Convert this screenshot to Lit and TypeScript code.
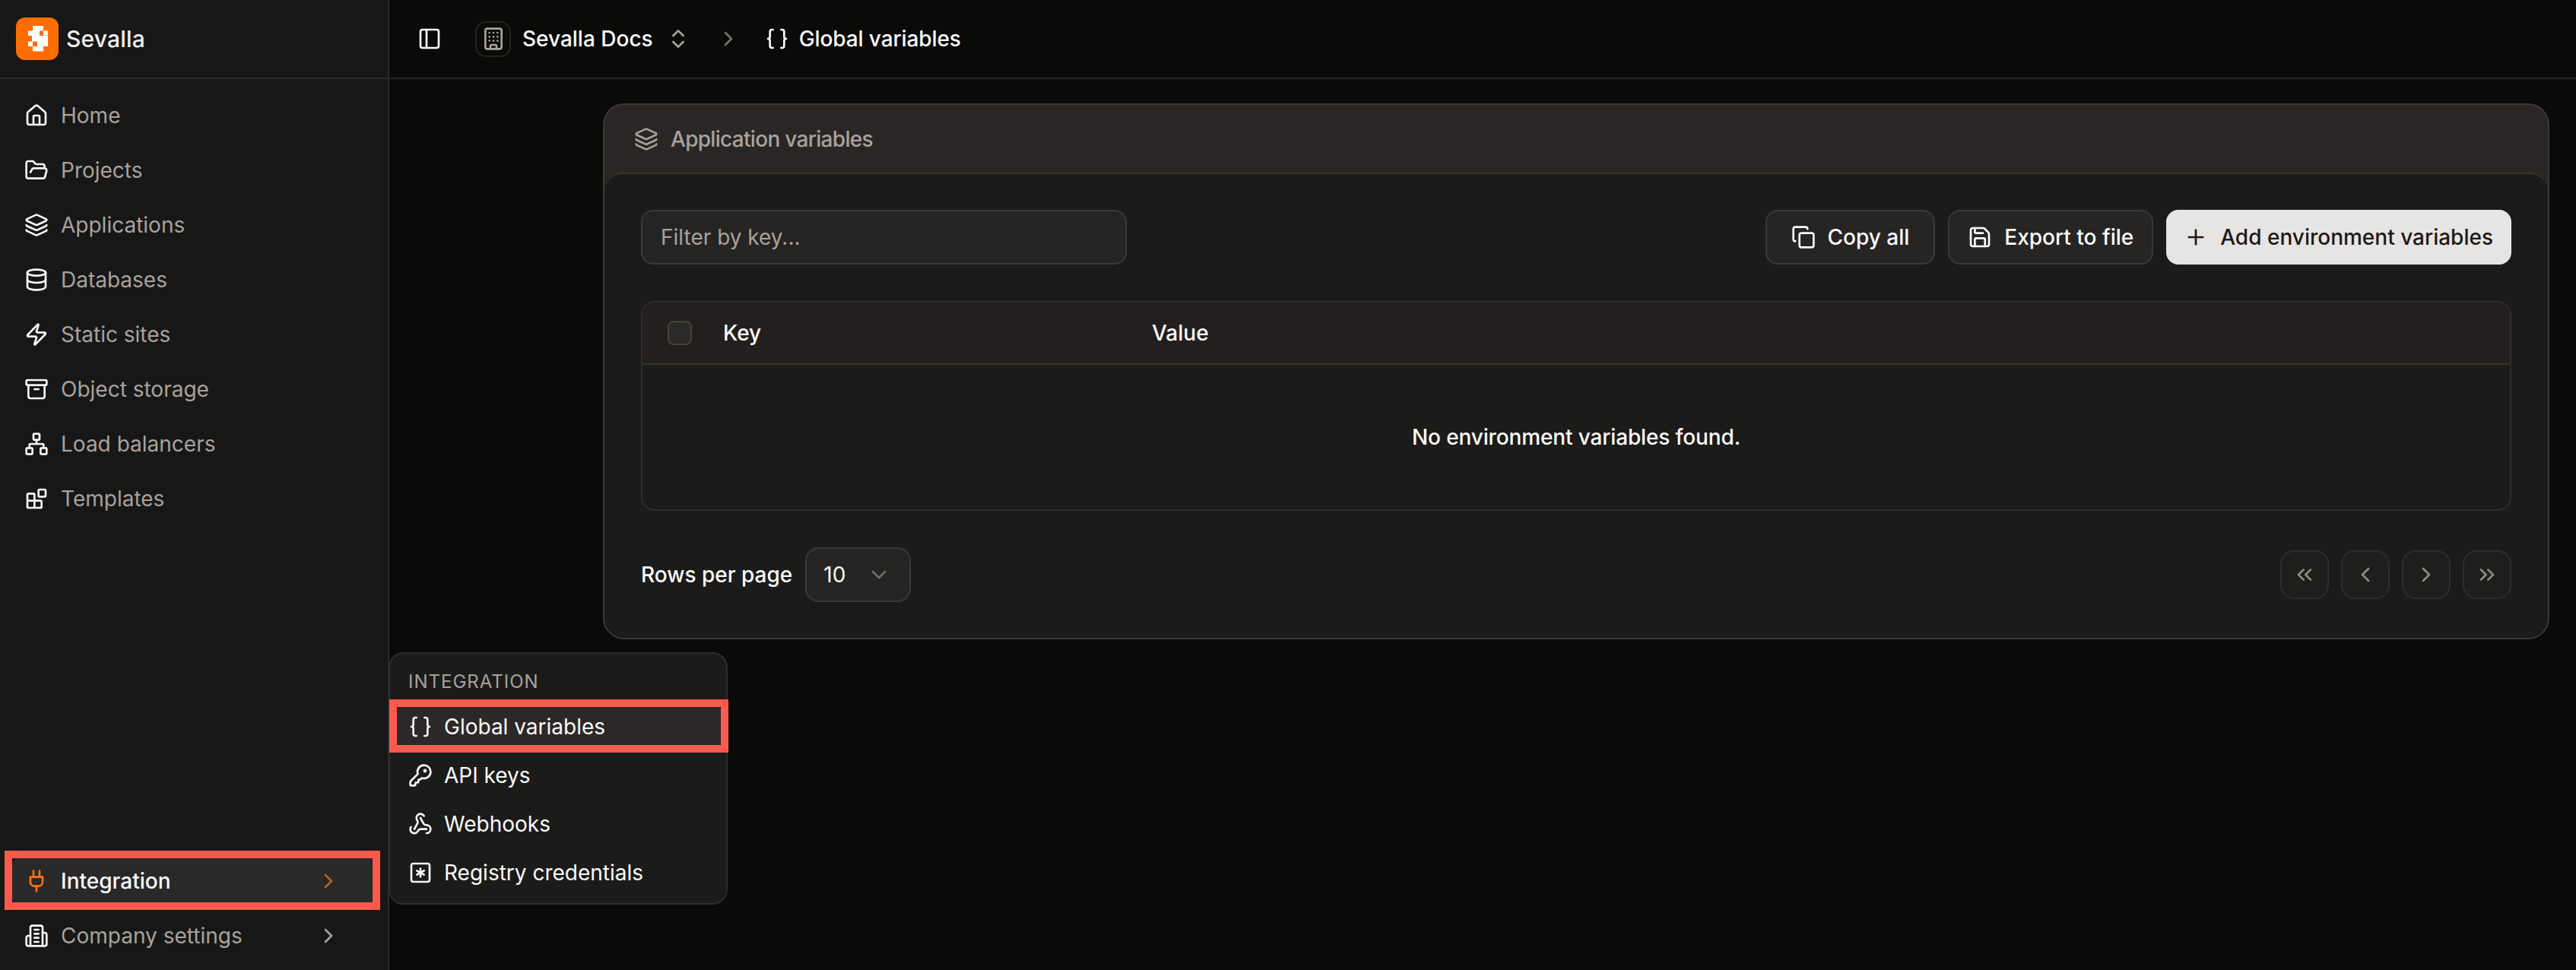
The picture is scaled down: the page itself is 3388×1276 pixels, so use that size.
import { LitElement, html, css, svg } from 'lit';
import { customElement } from 'lit/decorators.js';

// lucide style icon bodies, all on a 24 grid
const icons: Record<string, unknown> = {
  home: svg`<path d="M15 21v-8a1 1 0 0 0-1-1h-4a1 1 0 0 0-1 1v8"/><path d="M3 10a2 2 0 0 1 .709-1.528l7-5.999a2 2 0 0 1 2.582 0l7 5.999A2 2 0 0 1 21 10v9a2 2 0 0 1-2 2H5a2 2 0 0 1-2-2z"/>`,
  folder: svg`<path d="m6 14 1.5-2.9A2 2 0 0 1 9.24 10H20a2 2 0 0 1 1.94 2.5l-1.54 6a2 2 0 0 1-1.95 1.5H4a2 2 0 0 1-2-2V5a2 2 0 0 1 2-2h3.9a2 2 0 0 1 1.69.9l.81 1.2a2 2 0 0 0 1.67.9H18a2 2 0 0 1 2 2v2"/>`,
  layers: svg`<path d="M12.83 2.18a2 2 0 0 0-1.66 0L2.6 6.08a1 1 0 0 0 0 1.83l8.58 3.91a2 2 0 0 0 1.66 0l8.58-3.9a1 1 0 0 0 0-1.83z"/><path d="M2 12a1 1 0 0 0 .58.91l8.6 3.91a2 2 0 0 0 1.65 0l8.58-3.9A1 1 0 0 0 22 12"/><path d="M2 17a1 1 0 0 0 .58.91l8.6 3.91a2 2 0 0 0 1.65 0l8.58-3.9A1 1 0 0 0 22 17"/>`,
  database: svg`<ellipse cx="12" cy="5" rx="9" ry="3"/><path d="M3 5V19A9 3 0 0 0 21 19V5"/><path d="M3 12A9 3 0 0 0 21 12"/>`,
  zap: svg`<path d="M4 14a1 1 0 0 1-.78-1.63l9.9-10.2a.5.5 0 0 1 .86.46l-1.92 6.02A1 1 0 0 0 13 10h7a1 1 0 0 1 .78 1.63l-9.9 10.2a.5.5 0 0 1-.86-.46l1.92-6.02A1 1 0 0 0 11 14z"/>`,
  archive: svg`<rect width="20" height="5" x="2" y="3" rx="1"/><path d="M4 8v11a2 2 0 0 0 2 2h12a2 2 0 0 0 2-2V8"/><path d="M10 12h4"/>`,
  network: svg`<rect x="16" y="16" width="6" height="6" rx="1"/><rect x="2" y="16" width="6" height="6" rx="1"/><rect x="9" y="2" width="6" height="6" rx="1"/><path d="M5 16v-3a1 1 0 0 1 1-1h12a1 1 0 0 1 1 1v3"/><path d="M12 12V8"/>`,
  blocks: svg`<rect width="7" height="7" x="14" y="3" rx="1"/><path d="M10 21V8a1 1 0 0 0-1-1H4a1 1 0 0 0-1 1v12a1 1 0 0 0 1 1h12a1 1 0 0 0 1-1v-5a1 1 0 0 0-1-1H3"/>`,
  plug: svg`<path d="M12 22v-5"/><path d="M9 8V2"/><path d="M15 8V2"/><path d="M18 8v5a4 4 0 0 1-4 4h-4a4 4 0 0 1-4-4V8Z"/>`,
  company: svg`<path d="M6 22V4a2 2 0 0 1 2-2h8a2 2 0 0 1 2 2v18Z"/><path d="M6 12H4a2 2 0 0 0-2 2v6a2 2 0 0 0 2 2h2"/><path d="M18 9h2a2 2 0 0 1 2 2v9a2 2 0 0 1-2 2h-2"/><path d="M10 6h4"/><path d="M10 10h4"/><path d="M10 14h4"/><path d="M10 18h4"/>`,
  right: svg`<path d="m9 18 6-6-6-6"/>`,
  left: svg`<path d="m15 18-6-6 6-6"/>`,
  down: svg`<path d="m6 9 6 6 6-6"/>`,
  first: svg`<path d="m11 17-5-5 5-5"/><path d="m18 17-5-5 5-5"/>`,
  last: svg`<path d="m6 17 5-5-5-5"/><path d="m13 17 5-5-5-5"/>`,
  updown: svg`<path d="m7 15 5 5 5-5"/><path d="m7 9 5-5 5 5"/>`,
  braces: svg`<path d="M8 3H7a2 2 0 0 0-2 2v5a2 2 0 0 1-2 2 2 2 0 0 1 2 2v5c0 1.1.9 2 2 2h1"/><path d="M16 21h1a2 2 0 0 0 2-2v-5c0-1.1.9-2 2-2a2 2 0 0 1-2-2V5a2 2 0 0 0-2-2h-1"/>`,
  key: svg`<path d="M2.586 17.414A2 2 0 0 0 2 18.828V21a1 1 0 0 0 1 1h3a1 1 0 0 0 1-1v-1a1 1 0 0 1 1-1h1a1 1 0 0 0 1-1v-1a1 1 0 0 1 1-1h.172a2 2 0 0 0 1.414-.586l.814-.814a6.5 6.5 0 1 0-4-4z"/><circle cx="16.5" cy="7.500" r=".8"/>`,
  webhook: svg`<path d="M18 16.98h-5.99c-1.1 0-1.95.94-2.48 1.9A4 4 0 0 1 2 17c.01-.7.2-1.4.57-2"/><path d="m6 17 3.13-5.78c.53-.97.1-2.18-.5-3.1a4 4 0 1 1 6.89-4.06"/><path d="m12 6 3.13 5.73C15.66 12.7 16.9 13 18 13a4 4 0 0 1 0 8"/>`,
  asterisk: svg`<rect width="18" height="18" x="3" y="3" rx="2"/><path d="M12 8v8"/><path d="m8.5 14 7-4"/><path d="m8.5 10 7 4"/>`,
  panel: svg`<rect width="18" height="18" x="3" y="3" rx="2"/><path d="M9 3v18"/>`,
  building: svg`<path d="M12 10h.01"/><path d="M12 14h.01"/><path d="M12 6h.01"/><path d="M16 10h.01"/><path d="M16 14h.01"/><path d="M16 6h.01"/><path d="M8 10h.01"/><path d="M8 14h.01"/><path d="M8 6h.01"/><path d="M9 22v-3a1 1 0 0 1 1-1h4a1 1 0 0 1 1 1v3"/><rect x="4" y="2" width="16" height="20" rx="2"/>`,
  copy: svg`<rect width="14" height="14" x="8" y="8" rx="2"/><path d="M4 16c-1.1 0-2-.9-2-2V4c0-1.1.9-2 2-2h10c1.1 0 2 .9 2 2"/>`,
  save: svg`<path d="M15.2 3a2 2 0 0 1 1.4.6l3.8 3.8a2 2 0 0 1 .6 1.4V19a2 2 0 0 1-2 2H5a2 2 0 0 1-2-2V5a2 2 0 0 1 2-2z"/><path d="M17 21v-7a1 1 0 0 0-1-1H8a1 1 0 0 0-1 1v7"/><path d="M7 3v4a1 1 0 0 0 1 1h7"/>`,
  plus: svg`<path d="M5 12h14"/><path d="M12 5v14"/>`,
};

const icon = (name: string) =>
  html`<svg class="ic" viewBox="0 0 24 24" fill="none" stroke="currentColor" stroke-linecap="round" stroke-linejoin="round">${icons[name]}</svg>`;

const mainNav = [
  ['home', 'Home'],
  ['folder', 'Projects'],
  ['layers', 'Applications'],
  ['database', 'Databases'],
  ['zap', 'Static sites'],
  ['archive', 'Object storage'],
  ['network', 'Load balancers'],
  ['blocks', 'Templates'],
];

const subNav = [
  ['key', 'API keys'],
  ['webhook', 'Webhooks'],
  ['asterisk', 'Registry credentials'],
];

@customElement('app-root')
export class AppRoot extends LitElement {
  static styles = css`
    :host {
      display: flex;
      position: relative;
      width: 100%;
      height: 100vh;
      overflow: hidden;
      background: #0a0a09;
      color: #fafaf9;
      font-family: Inter, "Liberation Sans", sans-serif;
      font-size: 28px;
      font-weight: 500;
      line-height: 40px;
    }
    * {
      box-sizing: border-box;
    }
    .ic {
      flex: none;
      width: 32px;
      height: 32px;
      stroke-width: 2;
    }

    /* sidebar */
    .sidebar {
      flex: none;
      width: 512px;
      display: flex;
      flex-direction: column;
      background: #171717;
      border-right: 2px solid #2b2b2b;
    }
    .brand {
      flex: none;
      height: 104px;
      display: flex;
      align-items: center;
      gap: 10px;
      padding-left: 21px;
      border-bottom: 2px solid #2b2b2b;
      font-size: 30px;
      letter-spacing: 0.2px;
      color: #eeeeec;
    }
    .logo {
      width: 56px;
      height: 56px;
      flex: none;
    }
    .nav {
      display: flex;
      flex-direction: column;
      gap: 8px;
      padding: 16px;
    }
    .nav.bottom {
      margin-top: auto;
      padding-bottom: 13px;
    }
    .row {
      position: relative;
      height: 64px;
      display: flex;
      align-items: center;
      gap: 16px;
      padding: 0 16px;
      border-radius: 12px;
      color: #a8a29e;
      font-weight: 400;
    }
    .row .ic {
      color: #f5f5f4;
    }
    .row .chev {
      margin-left: auto;
      margin-right: 30px;
      display: flex;
    }
    .row .chev .ic {
      color: #a8a29e;
    }
    .row.active {
      background: #292929;
      color: #fafaf9;
      font-weight: 500;
    }
    .row.active .ic {
      color: #f97316;
    }
    .row.active .chev .ic {
      color: #b4611f;
    }
    .mark::after {
      content: '';
      position: absolute;
      border: 10px solid #fd5a4e;
      pointer-events: none;
    }
    .row.active.mark::after {
      inset: -8px -6px -6px -10px;
    }

    /* flyout menu */
    .flyout {
      position: absolute;
      left: 511px;
      top: 858px;
      width: 446px;
      height: 332px;
      padding: 8px 7px 8px 8px;
      background: #1b1b1a;
      border: 2px solid #2e2d2c;
      border-radius: 20px;
    }
    .flyout .label {
      height: 56px;
      display: flex;
      align-items: center;
      padding: 2px 0 0 16px;
      font-size: 24px;
      font-weight: 400;
      letter-spacing: 1px;
      color: #a8a29e;
    }
    .flyout .row {
      gap: 15px;
      color: #fafaf9;
    }
    .flyout .row.current {
      background: #2c2827;
    }
    .flyout .row.mark::after {
      inset: -4px -10px -2px -9px;
    }

    /* main column */
    .main {
      flex: 1;
      min-width: 0;
      display: flex;
      flex-direction: column;
    }
    .topbar {
      flex: none;
      height: 104px;
      display: flex;
      align-items: center;
      padding-left: 37px;
      border-bottom: 2px solid #262625;
    }
    .tile {
      width: 47px;
      height: 47px;
      margin: 0 15px 0 44px;
      display: flex;
      align-items: center;
      justify-content: center;
      border: 2px solid #222221;
      border-radius: 14px;
      color: #a8a29e;
    }
    .updown {
      margin: 0 34px 0 17px;
      display: flex;
      color: #a8a29e;
    }
    .crumb-sep {
      display: flex;
      margin-right: 32px;
      color: #78716c;
    }
    .crumb-ic {
      display: flex;
      margin-right: 13px;
    }
    .crumb-current {
      letter-spacing: -0.1px;
    }
    .content {
      flex: 1;
      padding: 32px 35px 0 281px;
    }

    /* card */
    .card {
      height: 705px;
      display: flex;
      flex-direction: column;
      overflow: hidden;
      background: #2a2625;
      border: 2px solid #3b3937;
      border-radius: 28px;
    }
    .card-head {
      flex: none;
      height: 89px;
      display: flex;
      align-items: center;
      gap: 16px;
      padding-left: 39px;
      letter-spacing: -0.7px;
      color: #a8a29e;
    }
    .panel {
      flex: 1;
      display: flex;
      flex-direction: column;
      padding: 47px 48px;
      background: #1b1b19;
      border-top: 2px solid #35322f;
      border-radius: 24px 24px 0 0;
    }
    .toolbar {
      display: flex;
      justify-content: space-between;
      height: 72px;
    }
    .filter {
      width: 639px;
      display: flex;
      align-items: center;
      padding-left: 24px;
      background: #252423;
      border: 2px solid #3a3937;
      border-radius: 16px;
      color: #a8a29e;
      font-weight: 400;
    }
    .actions {
      display: flex;
      gap: 17px;
    }
    .btn {
      display: flex;
      align-items: center;
      gap: 16px;
      padding: 0 24px;
      background: #262524;
      border: 2px solid #3a3937;
      border-radius: 16px;
    }
    .btn.wide {
      padding: 0 32px;
    }
    .btn.primary {
      background: #e7e5e4;
      border-color: #e7e5e4;
      color: #1c1917;
      padding: 0 22px 0 21px;
    }

    /* table */
    .table {
      flex: none;
      height: 276px;
      margin-top: 48px;
      display: flex;
      flex-direction: column;
      overflow: hidden;
      border: 2px solid #2e2d2b;
      border-radius: 18px;
    }
    .thead {
      flex: none;
      height: 82px;
      display: flex;
      align-items: center;
      padding-left: 33px;
      background: #231f1e;
      border-bottom: 2px solid #35332f;
    }
    .check {
      width: 32px;
      height: 32px;
      background: #2a2a29;
      border: 2px solid #44433f;
      border-radius: 8px;
    }
    .th-key {
      width: 564px;
      margin-left: 41px;
    }
    .tbody {
      flex: 1;
      display: flex;
      align-items: center;
      justify-content: center;
      letter-spacing: -0.14px;
    }

    /* footer */
    .footer {
      margin-top: 48px;
      height: 72px;
      display: flex;
      align-items: center;
      justify-content: space-between;
    }
    .rows {
      display: flex;
      align-items: center;
      gap: 17px;
    }
    .select {
      width: 139px;
      height: 72px;
      display: flex;
      align-items: center;
      justify-content: space-between;
      padding: 0 24px 0 22px;
      background: #252423;
      border: 2px solid #3a3937;
      border-radius: 18px;
      font-weight: 400;
    }
    .select .ic {
      color: #6f6d69;
    }
    .pager {
      display: flex;
      gap: 16px;
    }
    .page {
      width: 64px;
      height: 64px;
      display: flex;
      align-items: center;
      justify-content: center;
      background: #1e1e1c;
      border: 2px solid #2e2d2b;
      border-radius: 18px;
      color: #8f8c87;
    }
  `;

  render() {
    return html`
      <aside class="sidebar">
        <div class="brand">
          <svg class="logo" viewBox="0 0 56 56">
            <rect width="56" height="56" rx="12" fill="#ff6c00" />
            <path fill="#fff" d="M22 11h14v6.500H22zM16 17.500h15v6.500H16zM36 17.500h6v6h-6zM21 24h21v7.500H21zM16 31.500h6v6.500h-6zM28 31.500h14v6.500H28zM22 38h14v6.500H22z" />
          </svg>
          Sevalla
        </div>
        <nav class="nav">
          ${mainNav.map(([ic, label]) => html`<div class="row">${icon(ic)}${label}</div>`)}
        </nav>
        <nav class="nav bottom">
          <div class="row active mark">
            ${icon('plug')}Integration<span class="chev">${icon('right')}</span>
          </div>
          <div class="row">
            ${icon('company')}Company settings<span class="chev">${icon('right')}</span>
          </div>
        </nav>
      </aside>

      <div class="main">
        <header class="topbar">
          ${icon('panel')}
          <span class="tile">${icon('building')}</span>
          Sevalla Docs
          <span class="updown">${icon('updown')}</span>
          <span class="crumb-sep">${icon('right')}</span>
          <span class="crumb-ic">${icon('braces')}</span>
          <span class="crumb-current">Global variables</span>
        </header>
        <div class="content">
          <section class="card">
            <div class="card-head">${icon('layers')}Application variables</div>
            <div class="panel">
              <div class="toolbar">
                <div class="filter">Filter by key...</div>
                <div class="actions">
                  <div class="btn wide">${icon('copy')}Copy all</div>
                  <div class="btn">${icon('save')}Export to file</div>
                  <div class="btn primary">${icon('plus')}Add environment variables</div>
                </div>
              </div>
              <div class="table">
                <div class="thead">
                  <span class="check"></span>
                  <span class="th-key">Key</span>
                  <span>Value</span>
                </div>
                <div class="tbody">No environment variables found.</div>
              </div>
              <div class="footer">
                <div class="rows">
                  Rows per page
                  <div class="select">10 ${icon('down')}</div>
                </div>
                <div class="pager">
                  ${['first', 'left', 'right', 'last'].map((n) => html`<span class="page">${icon(n)}</span>`)}
                </div>
              </div>
            </div>
          </section>
        </div>
      </div>

      <div class="flyout">
        <div class="label">INTEGRATION</div>
        <div class="row current mark">${icon('braces')}Global variables</div>
        ${subNav.map(([ic, label]) => html`<div class="row">${icon(ic)}${label}</div>`)}
      </div>
    `;
  }
}
